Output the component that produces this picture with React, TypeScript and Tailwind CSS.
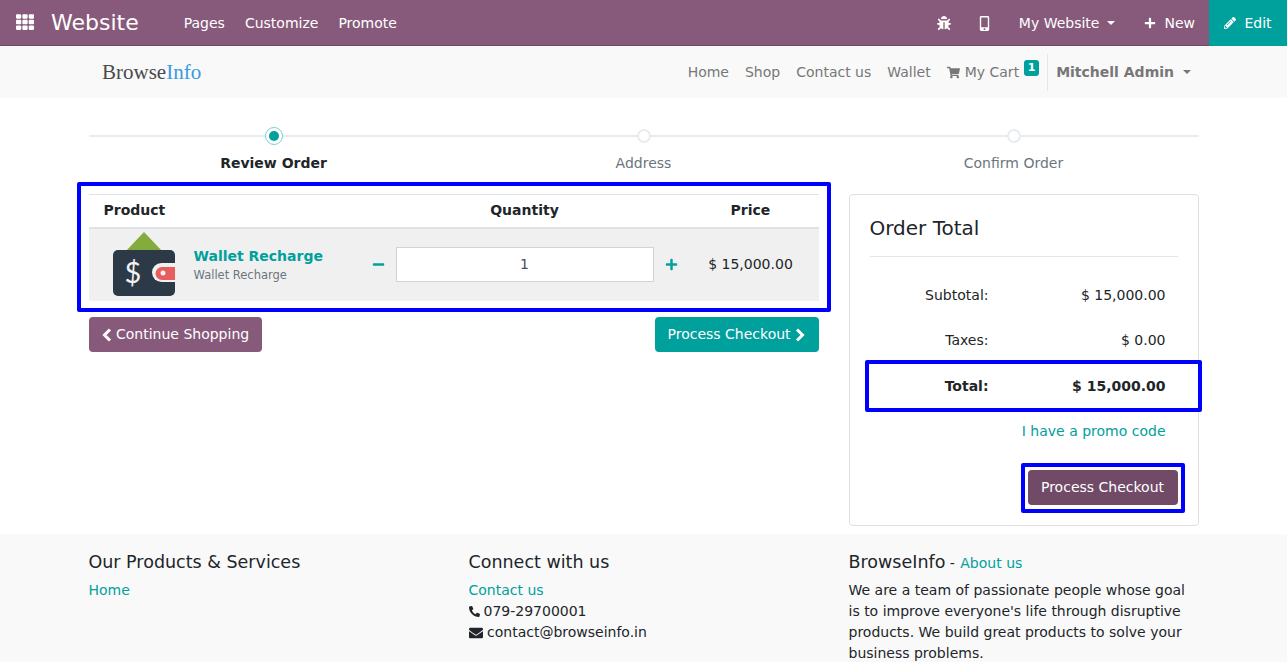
import { FaTh, FaBug, FaMobileAlt, FaPlus, FaPencilAlt, FaShoppingCart, FaPhoneAlt, FaEnvelope, FaMinus } from "react-icons/fa";

function Caret({ className }: { className: string }) {
  return <span className={`inline-block h-0 w-0 border-x-[4px] border-t-[4px] border-x-transparent border-t-current align-[3px] ${className}`} />;
}

function Chevron({ dir, className }: { dir: "left" | "right"; className: string }) {
  return (
    <svg viewBox="0 0 10 14" className={`h-[14px] w-[10px] ${className}`} fill="none" stroke="currentColor" strokeWidth="3">
      <path d={dir === "left" ? "M8 1.500 2.500 7 8 12.500" : "M2 1.500 7.500 7 2 12.500"} />
    </svg>
  );
}

function Highlight({ className }: { className: string }) {
  return <div className={`pointer-events-none absolute rounded-[2px] border-4 border-[#0000ff] ${className}`} />;
}

function TopBar() {
  return (
    <div className="flex h-[46px] items-center border-b border-[#6d4a64] bg-[#875a7b] pt-[1px] text-white">
      <FaTh className="ml-4 -mt-[2px] h-[18px] w-[18px]" />
      <span className="ml-[17px] text-[22px] leading-none">Website</span>
      <nav className="ml-[45px] flex gap-5">
        <span>Pages</span>
        <span>Customize</span>
        <span>Promote</span>
      </nav>
      <div className="ml-auto flex h-full items-center">
        <FaBug className="h-[14px] w-[14px]" />
        <FaMobileAlt className="ml-[26px] h-[15px] w-[15px]" />
        <span className="ml-[27px]">My Website<Caret className="ml-[8px]" /></span>
        <span className="ml-[29px] flex items-center"><FaPlus className="mr-[8px] h-[12px] w-[12px]" />New</span>
        <div className="ml-[14px] flex h-[46px] w-[78px] items-center justify-center bg-[#00a09d]">
          <FaPencilAlt className="mr-[8px] h-[12px] w-[12px]" />Edit
        </div>
      </div>
    </div>
  );
}

function SiteNav() {
  return (
    <div className="flex h-[52px] items-center bg-[#f9f9f9] pl-[102px] text-[#777777]">
      <span className="font-['Liberation_Serif',serif] text-[21px] leading-none text-[#4a4a4a]">
        Browse<span className="text-[#3b9ae1]">Info</span>
      </span>
      <nav className="ml-auto flex items-center gap-4">
        <span>Home</span>
        <span>Shop</span>
        <span>Contact us</span>
        <span>Wallet</span>
        <span className="relative flex items-center">
          <FaShoppingCart className="mr-[5px] h-[13px] w-[13px]" />My Cart
          <span className="ml-[5px] -mt-[8px] flex h-[16px] w-[15px] items-center justify-center rounded-[3px] bg-[#00a09d] text-[11px] font-bold text-white">1</span>
        </span>
      </nav>
      <div className="ml-[8px] mr-[96px] flex h-[37px] items-center border-l border-[#e6e6e6] pl-[8px] font-bold">
        Mitchell Admin<Caret className="ml-[9px]" />
      </div>
    </div>
  );
}

function Step({ label, state }: { label: string; state: "active" | "todo" }) {
  const active = state === "active";
  return (
    <div className="relative flex flex-col items-center">
      <div className="absolute inset-x-0 top-[8px] h-[2px] bg-[#e9ecef]" />
      {active ? (
        <div className="relative flex h-[18px] w-[18px] items-center justify-center rounded-full border border-[#7fcfce] bg-white">
          <div className="h-[10px] w-[10px] rounded-full bg-[#00a09d]" />
        </div>
      ) : (
        <div className="relative my-[2px] h-[14px] w-[14px] rounded-full border-2 border-[#e9ecef] bg-white" />
      )}
      <div className={`mt-[8px] ${active ? "font-bold text-[#212529]" : "text-[#6c757d]"}`}>{label}</div>
    </div>
  );
}

function WalletImage() {
  return (
    <svg viewBox="0 0 62 64" className="h-[64px] w-[62px]">
      <polygon points="31,0 49,19 13,19" fill="#84ac3c" />
      <rect x="0" y="18" width="62" height="46" rx="5" fill="#2c3a47" />
      <path d="M62 31h-13.500a9.500 9.500 0 0 0 0 19h13.500z" fill="#f1f1f1" />
      <path d="M62 35h-13a6.500 6.500 0 0 0 0 13h13z" fill="#e85d5d" />
      <circle cx="50" cy="41" r="2.500" fill="#f1f1f1" />
      <text x="20" y="51" textAnchor="middle" fill="#f1f1f1" className="font-['Lato',sans-serif] text-[29px]">$</text>
    </svg>
  );
}

function CartTable() {
  return (
    <div className="relative">
      <Highlight className="-inset-x-3 -top-3 -bottom-[11px]" />
      <div className="grid h-[33px] grid-cols-[278px_316px_136px] items-center border-t border-[#dee2e6] pb-[2px] font-bold text-[#212529]">
        <div className="pl-[15px]">Product</div>
        <div className="text-center">Quantity</div>
        <div className="text-center">Price</div>
      </div>
      <div className="grid h-[74px] grid-cols-[278px_316px_136px] items-center border-t-2 border-[#dee2e6] bg-[#f0f0f0] pb-[2px]">
        <div className="flex items-center pl-[24px]">
          <WalletImage />
          <div className="ml-[19px] mt-[2px]">
            <div className="font-bold leading-[21px] text-[#00a09d]">Wallet Recharge</div>
            <div className="text-[11.500px] leading-[17px] text-[#6c757d]">Wallet Recharge</div>
          </div>
        </div>
        <div className="flex items-center justify-center">
          <FaMinus className="h-[13px] w-[13px] text-[#00a09d]" />
          <div className="mx-[11px] flex h-[35px] w-[258px] items-center justify-center border border-[#ced4da] bg-white text-[#495057]">1</div>
          <FaPlus className="h-[13px] w-[13px] text-[#00a09d]" />
        </div>
        <div className="text-center text-[#212529]">$ 15,000.00</div>
      </div>
    </div>
  );
}

function SummaryRow({ label, value, bold }: { label: string; value: string; bold?: boolean }) {
  return (
    <div className={`flex h-[45.500px] items-center text-[#212529] ${bold ? "font-bold" : ""}`}>
      <div className="w-[119px] text-right">{label}</div>
      <div className="w-[177px] text-right">{value}</div>
    </div>
  );
}

function OrderTotal() {
  return (
    <div className="h-[332px] w-[350px] rounded-[4px] border border-[#dfdfdf] px-5 pt-[17px]">
      <div className="border-b border-[#e5e5e5] pb-[12px] text-[20px] leading-[32px] text-[#212529]">Order Total</div>
      <div className="mt-[15.700px]">
        <SummaryRow label="Subtotal:" value="$ 15,000.00" />
        <SummaryRow label="Taxes:" value="$ 0.00" />
        <div className="relative">
          <Highlight className="-left-[5px] -right-[24px] -top-[4px] -bottom-[3px]" />
          <SummaryRow label="Total:" value="$ 15,000.00" bold />
        </div>
      </div>
      <div className="mt-[12px] pr-[12px] text-right leading-[21px] text-[#00a09d]">I have a promo code</div>
      <div className="mt-[28px] flex justify-end">
        <div className="relative">
          <Highlight className="-inset-x-[7px] -top-[7px] -bottom-[8px]" />
          <div className="flex h-[35px] w-[150px] items-center justify-center rounded-[4px] bg-[#704a66] text-white">Process Checkout</div>
        </div>
      </div>
    </div>
  );
}

function Footer() {
  return (
    <div className="grid h-[128px] grid-cols-[380px_380px_350px] gap-0 bg-[#f9f9f9] px-[88.500px] pt-[16px] text-[#212529]">
      <div>
        <div className="text-[17.500px] leading-[24px]">Our Products &amp; Services</div>
        <div className="mt-[6px] leading-[21px] text-[#00a09d]">Home</div>
      </div>
      <div>
        <div className="text-[17.500px] leading-[24px]">Connect with us</div>
        <div className="mt-[6px] leading-[21px] text-[#00a09d]">Contact us</div>
        <div className="flex items-center leading-[21px]"><FaPhoneAlt className="mr-[4px] h-[11px] w-[11px]" />079-29700001</div>
        <div className="flex items-center leading-[21px]"><FaEnvelope className="mr-[4.500px] h-[14px] w-[14px]" />contact@browseinfo.in</div>
      </div>
      <div>
        <div className="leading-[24px]"><span className="text-[17.500px]">BrowseInfo</span> - <span className="ml-[1px] text-[#00a09d]">About us</span></div>
        <p className="mt-[5px] leading-[21px]">We are a team of passionate people whose goal is to improve everyone's life through disruptive products. We build great products to solve your business problems.</p>
      </div>
    </div>
  );
}

export default function App() {
  return (
    <div className="h-[662px] overflow-hidden bg-white font-['DejaVu_Sans',sans-serif] text-[14px]">
      <TopBar />
      <SiteNav />
      <main className="h-[436px] px-[88.500px] pt-[29px]">
        <div className="grid grid-cols-3">
          <Step label="Review Order" state="active" />
          <Step label="Address" state="todo" />
          <Step label="Confirm Order" state="todo" />
        </div>
        <div className="mt-[20px] flex justify-between">
          <div className="w-[730px]">
            <CartTable />
            <div className="mt-[16px] flex justify-between">
              <div className="flex h-[35px] w-[173px] items-center rounded-[4px] bg-[#875a7b] pl-[13px] text-white">
                <Chevron dir="left" className="mr-[4.500px]" />Continue Shopping
              </div>
              <div className="flex h-[35px] w-[164px] items-center rounded-[4px] bg-[#00a09d] pl-[13px] text-white">
                Process Checkout<Chevron dir="right" className="ml-[4px]" />
              </div>
            </div>
          </div>
          <OrderTotal />
        </div>
      </main>
      <Footer />
    </div>
  );
}
